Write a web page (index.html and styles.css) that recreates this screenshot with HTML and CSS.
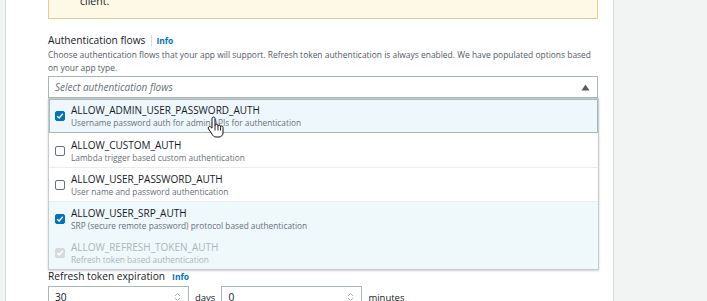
FILE: index.html
```html
<!DOCTYPE html>
<html lang="en">
<head>
    <meta charset="UTF-8">
    <meta name="viewport" content="width=device-width, initial-scale=1.0">
    <title>App client - Authentication flows</title>
    <link rel="stylesheet" href="styles.css">
</head>
<body>
    <div class="layout">
        <div class="gutter"></div>

        <main class="panel">
            <div class="alert">
                <p>client.</p>
            </div>

            <div class="field">
                <div class="labelRow">
                    <span class="label">Authentication flows</span>
                    <span class="divider"></span>
                    <a class="info" href="#">Info</a>
                </div>
                <p class="desc">Choose authentication flows that your app will support. Refresh token authentication is always enabled. We have populated options based on your app type.</p>

                <div class="selectWrap">
                    <div class="select">
                        <span class="placeholder">Select authentication flows</span>
                        <svg class="caret" width="9" height="7" viewBox="0 0 9 7"><path d="M0.5 6.5 L4.5 0.5 L8.5 6.5 Z" fill="#545b64"/></svg>
                    </div>

                    <!-- open dropdown, sits over the fields below -->
                    <ul class="dropdown">
                        <li class="option hover">
                            <span class="check on"><svg width="8" height="8" viewBox="0 0 8 8"><path d="M1.2 4.2 L3.2 6 L6.8 1.8" fill="none" stroke="#fff" stroke-width="1.4"/></svg></span>
                            <div class="optText">
                                <div class="optTitle">ALLOW_ADMIN_USER_PASSWORD_AUTH</div>
                                <div class="optSub">Username password auth for admin APIs for authentication</div>
                            </div>
                            <svg class="cursor" width="17" height="22" viewBox="0 0 17 22">
                                <path d="M6.5 1 C5.7 1 5 1.7 5 2.5 V12.2 L3.8 11 C3.2 10.4 2.2 10.4 1.6 11 C1.1 11.5 1.1 12.3 1.5 12.9 L5 18.2 C5.8 19.7 7 21 9 21 H12 C14.2 21 16 19.2 16 17 V11.2 C16 10.5 15.4 9.9 14.7 9.9 C14 9.9 13.5 10.5 13.5 11.2 V10.3 C13.5 9.6 12.9 9 12.2 9 C11.5 9 11 9.6 11 10.3 V9.7 C11 9 10.4 8.4 9.7 8.4 C9 8.4 8 9 8 9.7 V2.5 C8 1.7 7.3 1 6.5 1 Z" fill="#fff" stroke="#111" stroke-width="1" stroke-linejoin="round"/>
                                <path d="M8 9.7 V14.5 M11 10.3 V14.5 M13.5 11.2 V14.5" fill="none" stroke="#111" stroke-width="0.9"/>
                            </svg>
                        </li>
                        <li class="option">
                            <span class="check"></span>
                            <div class="optText">
                                <div class="optTitle">ALLOW_CUSTOM_AUTH</div>
                                <div class="optSub">Lambda trigger based custom authentication</div>
                            </div>
                        </li>
                        <li class="option">
                            <span class="check"></span>
                            <div class="optText">
                                <div class="optTitle">ALLOW_USER_PASSWORD_AUTH</div>
                                <div class="optSub">User name and password authentication</div>
                            </div>
                        </li>
                        <li class="option selected">
                            <span class="check on"><svg width="8" height="8" viewBox="0 0 8 8"><path d="M1.2 4.2 L3.2 6 L6.8 1.8" fill="none" stroke="#fff" stroke-width="1.4"/></svg></span>
                            <div class="optText">
                                <div class="optTitle">ALLOW_USER_SRP_AUTH</div>
                                <div class="optSub">SRP (secure remote password) protocol based authentication</div>
                            </div>
                        </li>
                        <li class="option selected disabled">
                            <span class="check on"><svg width="8" height="8" viewBox="0 0 8 8"><path d="M1.2 4.2 L3.2 6 L6.8 1.8" fill="none" stroke="#fff" stroke-width="1.4"/></svg></span>
                            <div class="optText">
                                <div class="optTitle">ALLOW_REFRESH_TOKEN_AUTH</div>
                                <div class="optSub">Refresh token based authentication</div>
                            </div>
                        </li>
                    </ul>
                </div>
            </div>

            <div class="field expiry">
                <div class="labelRow">
                    <span class="label">Refresh token expiration</span>
                    <a class="info" href="#">Info</a>
                </div>
                <div class="duration">
                    <div class="numInput">
                        <span>30</span>
                        <svg class="spin" width="7" height="10" viewBox="0 0 7 10"><path d="M1 4 L3.5 1.5 L6 4 M1 6 L3.5 8.5 L6 6" fill="none" stroke="#aab7b8" stroke-width="1"/></svg>
                    </div>
                    <span class="unit">days</span>
                    <div class="numInput">
                        <span>0</span>
                        <svg class="spin" width="7" height="10" viewBox="0 0 7 10"><path d="M1 4 L3.5 1.5 L6 4 M1 6 L3.5 8.5 L6 6" fill="none" stroke="#aab7b8" stroke-width="1"/></svg>
                    </div>
                    <span class="unit">minutes</span>
                </div>
            </div>
        </main>

        <aside class="rail"></aside>
    </div>
</body>
</html>
```

FILE: styles.css
```css
* {
    box-sizing: border-box;
}
body {
    margin: 0;
    height: 301px;
    overflow: hidden;
    background-color: #f2f3f3;
    font-family: "Open Sans", "Noto Sans", sans-serif;
    color: #16191f;
}
.layout {
    display: flex;
    height: 100%;
}
.gutter {
    width: 5px;
}
.panel {
    width: 609px;
    background-color: #fff;
    border-left: 1px solid #d5dbdb;
    border-right: 1px solid #d5dbdb;
    padding: 0 15px 0 42px;
}
.rail {
    flex: 1;
}
.alert {
    margin-top: -17px;
    padding: 10px 16px 10px 31px;
    background-color: #fef9e6;
    border: 1px solid #dccf90;
}
.alert p {
    margin: 0;
    font-size: 10.5px;
    line-height: 14px;
}
.field {
    margin-top: 14px;
}
.labelRow {
    display: flex;
    align-items: center;
    height: 14px;
}
.label {
    font-size: 10.2px;
    line-height: 14px;
}
.divider {
    width: 1px;
    height: 11px;
    background-color: #d5dbdb;
    margin: 0 4px 0 6px;
}
.info {
    color: #0073bb;
    font-size: 8.5px;
    font-weight: 700;
    text-decoration: none;
}
.desc {
    margin: 1px 0 0;
    font-size: 8.45px;
    line-height: 13px;
    color: #545b64;
}
.selectWrap {
    position: relative;
    margin-top: 2px;
}
.select {
    height: 22px;
    border: 1px solid #aab7b8;
    display: flex;
    align-items: center;
    justify-content: space-between;
    padding: 0 7px 0 6px;
}
.placeholder {
    font-size: 10px;
    font-style: italic;
    color: #687078;
}
.dropdown {
    position: absolute;
    top: 22px;
    left: 0;
    right: -1px;
    margin: 0;
    padding: 0;
    list-style: none;
    background-color: #fff;
    border: 1px solid #c4cccd;
    box-shadow: 0 1px 2px rgba(0, 22, 40, 0.2);
    z-index: 2;
}
.option {
    position: relative;
    height: 34px;
    display: flex;
    align-items: center;
    padding: 0 8px 0 6px;
    border-top: 1px solid #eaeded;
}
.option:first-child {
    border-top-color: transparent;
}
.option.hover {
    background-color: #eef8fc;
    border: 1px solid #aab7b8;
    padding-left: 5px;
}
.option.hover + .option {
    border-top-color: transparent;
}
.option.selected {
    background-color: #eff8fb;
}
.option.selected + .option.selected {
    border-top-color: transparent;
}
.check {
    width: 10px;
    height: 10px;
    border: 1px solid #687078;
    border-radius: 2px;
    background-color: #fff;
    display: flex;
    align-items: center;
    justify-content: center;
    margin-right: 6px;
    flex-shrink: 0;
}
.check.on {
    background-color: #0073bb;
    border-color: #0073bb;
}
.optTitle {
    font-size: 10px;
    line-height: 14px;
    color: #16191f;
}
.optSub {
    font-size: 8.3px;
    line-height: 12px;
    color: #687078;
}
.disabled .check.on {
    background-color: #d5dbdb;
    border-color: #d5dbdb;
}
.disabled .optTitle,
.disabled .optSub {
    color: #aab7b8;
}
.cursor {
    position: absolute;
    left: 157px;
    top: 16px;
}
.expiry {
    margin-top: 171px;
}
.expiry .info {
    margin-left: 7px;
}
.duration {
    display: flex;
    align-items: center;
    margin-top: 3px;
}
.numInput {
    width: 141px;
    height: 22px;
    border: 1px solid #aab7b8;
    display: flex;
    align-items: center;
    justify-content: space-between;
    padding: 0 7px 0 6px;
    font-size: 10.2px;
}
.unit {
    font-size: 9.5px;
    margin: 0 6px 0 6px;
}
```
